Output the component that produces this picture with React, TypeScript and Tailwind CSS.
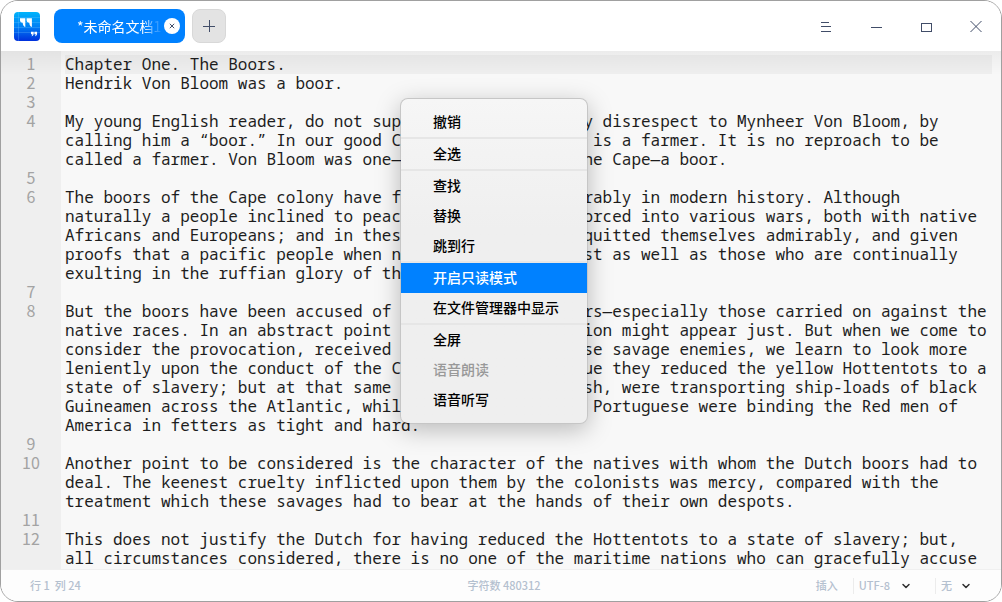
import { ChevronDown } from 'lucide-react';

const paragraphs: string[] = [
  'Chapter One. The Boors.',
  'Hendrik Von Bloom was a boor.',
  '',
  'My young English reader, do not suppose that I mean any disrespect to Mynheer Von Bloom, by calling him a “boor.” In our good Cape colony a “boor” is a farmer. It is no reproach to be called a farmer. Von Bloom was one—a Dutch farmer of the Cape—a boor.',
  '',
  'The boors of the Cape colony have figured very considerably in modern history. Although naturally a people inclined to peace, they have been forced into various wars, both with native Africans and Europeans; and in these wars they have acquitted themselves admirably, and given proofs that a pacific people when need be can fight just as well as those who are continually exulting in the ruffian glory of the soldier.',
  '',
  'But the boors have been accused of cruelty in their wars—especially those carried on against the native races. In an abstract point of view the accusation might appear just. But when we come to consider the provocation, received at the hands of these savage enemies, we learn to look more leniently upon the conduct of the Cape Dutch. It is true they reduced the yellow Hottentots to a state of slavery; but at that same time, we, the English, were transporting ship-loads of black Guineamen across the Atlantic, while the Spaniards and Portuguese were binding the Red men of America in fetters as tight and hard.',
  '',
  'Another point to be considered is the character of the natives with whom the Dutch boors had to deal. The keenest cruelty inflicted upon them by the colonists was mercy, compared with the treatment which these savages had to bear at the hands of their own despots.',
  '',
  'This does not justify the Dutch for having reduced the Hottentots to a state of slavery; but, all circumstances considered, there is no one of the maritime nations who can gracefully accuse',
];

type MenuEntry = { label: string; active?: boolean; disabled?: boolean };

const menuGroups: MenuEntry[][] = [
  [{ label: '撤销' }],
  [{ label: '全选' }],
  [{ label: '查找' }, { label: '替换' }, { label: '跳到行' }],
  [{ label: '开启只读模式', active: true }, { label: '在文件管理器中显示' }],
  [{ label: '全屏' }, { label: '语音朗读', disabled: true }, { label: '语音听写' }],
];

function Logo() {
  return (
    <svg viewBox="0 0 26 29" className="h-[29px] w-[26px] shrink-0" aria-hidden="true">
      <defs>
        <linearGradient id="page" x1="0" y1="0" x2="0" y2="1">
          <stop offset="0" stopColor="#00b4fb" />
          <stop offset="0.5" stopColor="#0080f5" />
          <stop offset="1" stopColor="#0030dc" />
        </linearGradient>
      </defs>
      <rect width="26" height="29" rx="4" fill="url(#page)" />
      <path d="M0 5.500H26M0 10.500H26M0 15.500H26M0 20.500H26M4.500 0V29" stroke="#7fd0ff" strokeOpacity=".35" strokeWidth=".7" />
      <path d="M6 6.200h5.300v8.800c-1.700-.5-2.500-2-2.600-4.200C7 10.600 6 9.700 6 8.200zM12.600 6.200h5.300v8.800c-1.700-.5-2.500-2-2.600-4.200-1.700-.2-2.700-1.100-2.700-2.600z" fill="#fff" />
      <path d="M17 19.700h2.700v1.800c0 1.500-.8 2.500-2.200 2.700.6-.7.8-1.300.8-2H17zM20.400 19.700h2.700v1.800c0 1.500-.8 2.500-2.200 2.700.6-.7.8-1.300.8-2h-1.300z" fill="#fff" />
    </svg>
  );
}

function TitleBar() {
  return (
    <header className="flex h-[50px] shrink-0 items-center bg-white pl-[13px]">
      <Logo />
      <div className="ml-[14px] flex h-[34px] w-[131px] items-center rounded-lg bg-[#0081ff] pr-[5px] pl-[23px]">
        <span className="flex-1 overflow-hidden mask-[linear-gradient(to_right,black_76%,rgba(0,0,0,0.35)_88%,transparent)] text-sm whitespace-nowrap text-white">
          *未命名文档1
        </span>
        <button aria-label="关闭标签" className="flex size-4 shrink-0 items-center justify-center rounded-full bg-white">
          <svg viewBox="0 0 6 6" className="size-[6px]" aria-hidden="true">
            <path d="M.8.8l4.400 4.400M5.200.8L.8 5.200" stroke="#414d68" />
          </svg>
        </button>
      </div>
      <button aria-label="新建标签" className="ml-[7px] flex size-[34px] items-center justify-center rounded-lg border border-[#d8d8d8] bg-[#e3e3e3]">
        <svg viewBox="0 0 12 12" className="size-3" shapeRendering="crispEdges" aria-hidden="true">
          <path d="M0 6.500h12M6.500 0v12" stroke="#414d68" />
        </svg>
      </button>
      <div className="ml-auto flex">
        <button aria-label="菜单" className="flex h-[50px] w-[50px] items-center justify-center">
          <svg viewBox="0 0 12 12" className="size-3" shapeRendering="crispEdges" aria-hidden="true">
            <path d="M1 2.500h8M1 6.500h10M1 11.500h10" stroke="#414d68" />
          </svg>
        </button>
        <button aria-label="最小化" className="flex h-[50px] w-[50px] items-center justify-center">
          <svg viewBox="0 0 12 12" className="size-3" shapeRendering="crispEdges" aria-hidden="true">
            <path d="M1 7.500h11" stroke="#414d68" />
          </svg>
        </button>
        <button aria-label="最大化" className="flex h-[50px] w-[50px] items-center justify-center">
          <svg viewBox="0 0 12 12" className="size-3" shapeRendering="crispEdges" aria-hidden="true">
            <path d="M1.500 3.500h10v8h-10z" fill="none" stroke="#414d68" />
          </svg>
        </button>
        <button aria-label="关闭" className="flex h-[50px] w-[50px] items-center justify-center">
          <svg viewBox="0 0 12 12" className="size-3" aria-hidden="true">
            <path d="M.5 1l11 11M11.500 1l-11 11" stroke="#414d68" />
          </svg>
        </button>
      </div>
    </header>
  );
}

function Editor() {
  return (
    <main className="relative flex min-h-0 flex-1 flex-col overflow-hidden bg-[linear-gradient(90deg,#efefef_60px,#f8f8f8_60px)] pt-1">
      <div className="pointer-events-none absolute inset-x-0 top-0 h-6 bg-linear-to-b from-black/5 to-transparent" />
      {paragraphs.map((text, i) => (
        <div key={i} className="flex shrink-0 pr-[9px]">
          <span className="mr-1 w-[60px] shrink-0 text-center text-base leading-[17px] text-[#a3a3a3]">{i + 1}</span>
          <p
            className={`min-h-[19px] flex-1 font-['Noto_Sans_Mono','DejaVu_Sans_Mono',monospace] text-base leading-[19px] text-[#1d1d1d] ${i === 0 ? 'bg-[#efefef]' : ''}`}
          >
            {text}
          </p>
        </div>
      ))}
    </main>
  );
}

function ContextMenu() {
  return (
    <div
      role="menu"
      className="absolute top-[98px] left-[400px] w-[188px] rounded-lg border border-black/20 bg-linear-to-b from-[#f6f6f6] to-[#efefef] to-40% bg-clip-padding py-2 shadow-[0_6px_24px_rgba(0,0,0,0.25)]"
    >
      {menuGroups.map((group, g) => (
        <div key={g} className={g > 0 ? 'border-t-2 border-[#e6e6e6]' : ''}>
          {group.map((item) => (
            <button
              key={item.label}
              role="menuitem"
              disabled={item.disabled}
              className={`block h-[30px] w-full pb-0.5 pl-8 text-left text-sm font-medium ${
                item.active ? 'bg-[#0081ff] text-white' : item.disabled ? 'text-[#999999]' : 'text-black'
              }`}
            >
              {item.label}
            </button>
          ))}
        </div>
      ))}
    </div>
  );
}

function StatusBar() {
  return (
    <footer className="grid h-8 shrink-0 grid-cols-3 items-center border-t border-[#f0f0f0] bg-[#fdfdfd] px-[29px] text-[11px] font-medium text-[#b4c0cf]">
      <span>行 1&nbsp; 列 24</span>
      <span className="pl-1.5 text-center">字符数 480312</span>
      <div className="flex items-center justify-end">
        <span>插入</span>
        <button className="ml-[15px] flex h-4 items-center gap-[10px] border-l border-[#ececec] pl-[5px]">
          UTF-8
          <ChevronDown className="size-3 text-[#303030]" strokeWidth={3} />
        </button>
        <button className="ml-[23px] flex h-4 items-center gap-2 border-l border-[#ececec] pl-[5px]">
          无
          <ChevronDown className="size-3 text-[#303030]" strokeWidth={3} />
        </button>
      </div>
    </footer>
  );
}

export default function App() {
  return (
    <div className="relative h-screen bg-white font-['Noto_Sans_CJK_SC',sans-serif]">
      <div className="flex h-full flex-col overflow-hidden rounded-[18px] border border-[#a0a0a0]">
        <TitleBar />
        <Editor />
        <StatusBar />
      </div>
      <ContextMenu />
    </div>
  );
}
